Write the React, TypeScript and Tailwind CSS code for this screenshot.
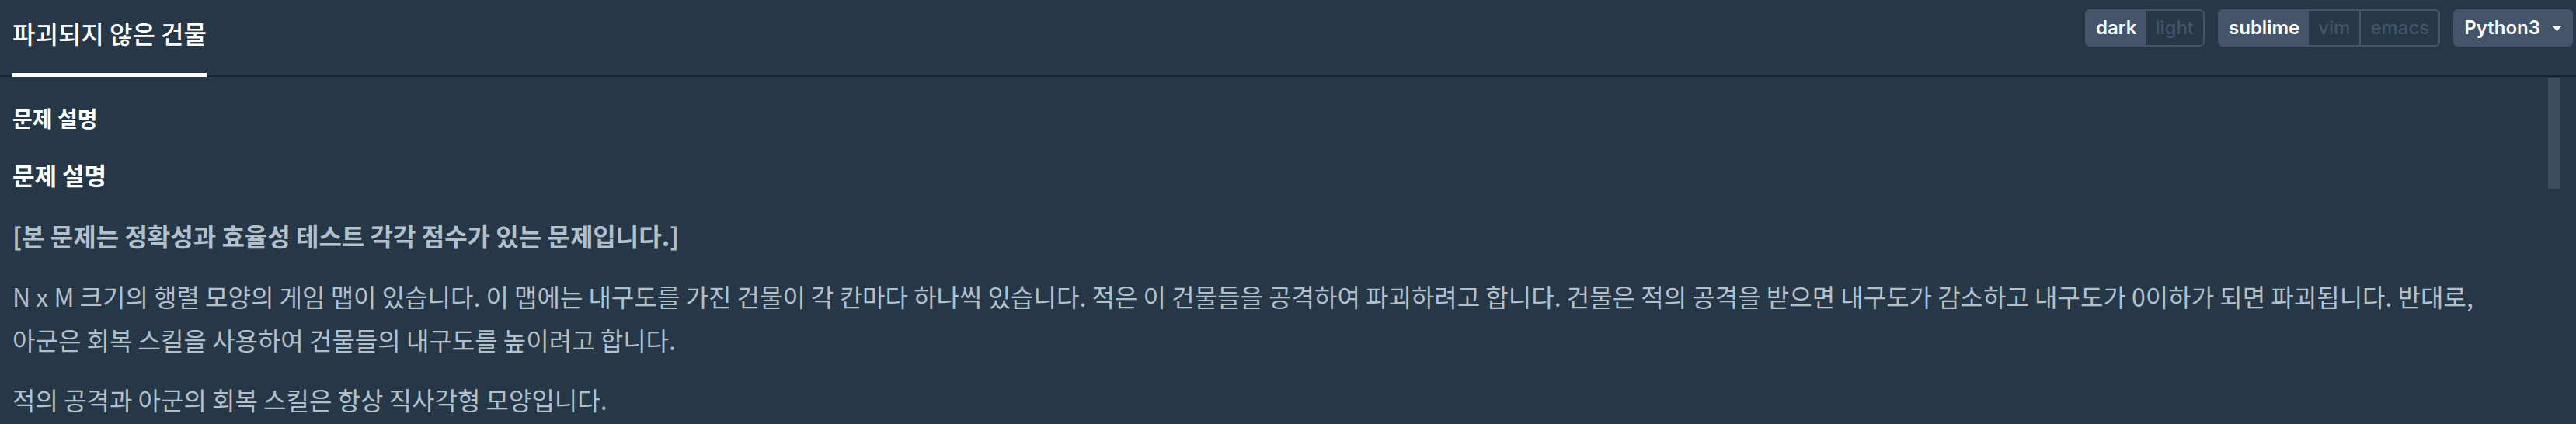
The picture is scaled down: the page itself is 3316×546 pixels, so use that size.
import React from "react";

const kr = { fontFamily: '"Noto Sans CJK KR", "Noto Sans", sans-serif' };

const SegGroup: React.FC<{ items: string[] }> = ({ items }) => {
    return (
        <div className="flex h-[48px] rounded-[6px] border-2 border-[#44546a] overflow-hidden">
            {items.map((item, index) => (
                <div
                    key={item}
                    className={
                        index === 0
                            ? "flex items-center px-[12px] bg-[#44546a] text-white font-semibold"
                            : index === 1
                                ? "flex items-center px-[12px] text-[#44546a] font-medium"
                                : "flex items-center px-[12px] text-[#44546a] font-medium border-l-2 border-[#44546a]"
                    }
                >
                    {item}
                </div>
            ))}
        </div>
    );
};

const App: React.FC = () => {
    return (
        <div className="w-full h-[546px] bg-[#263747] overflow-hidden flex flex-col">
            <div className="flex justify-between h-[99px] border-b-2 border-[#172334] shrink-0">
                <div className="ml-4 -mb-[2px] flex items-center pb-[10px] border-b-[5px] border-white">
                    <span className="text-white text-[32px] leading-[40px] font-medium" style={kr}>
                        파괴되지 않은 건물
                    </span>
                </div>
                <div className="flex items-start gap-[17px] pt-[12px] pr-[4px] text-[24px] font-['Inter',sans-serif]">
                    <SegGroup items={["dark", "light"]} />
                    <SegGroup items={["sublime", "vim", "emacs"]} />
                    <div className="flex items-center gap-[15px] h-[48px] px-[14px] rounded-[6px] bg-[#44546a] text-white font-semibold">
                        <span>Python3</span>
                        <svg width="13" height="7" viewBox="0 0 13 7">
                            <path d="M0 0 H13 L6.5 7 Z" fill="#ffffff" />
                        </svg>
                    </div>
                </div>
            </div>
            <div className="flex flex-1 min-h-0">
                <div className="flex-1 pl-4 pr-4 pt-[35px] break-keep" style={kr}>
                    <h5 className="text-white text-[28px] leading-[36px] font-bold">문제 설명</h5>
                    <h4 className="text-white text-[31px] leading-[40px] font-bold mt-[35px]">문제 설명</h4>
                    <p className="text-[#b2c0cc] text-[32px] leading-[56px] font-bold mt-[30px]">
                        [본 문제는 정확성과 효율성 테스트 각각 점수가 있는 문제입니다.]
                    </p>
                    <p className="text-[#b2c0cc] text-[32px] leading-[56px] mt-[22px]">
                        N x M 크기의 행렬 모양의 게임 맵이 있습니다. 이 맵에는 내구도를 가진 건물이 각 칸마다 하나씩 있습니다. 적은 이 건물들을 공격하여 파괴하려고 합니다. 건물은 적의 공격을 받으면 내구도가 감소하고 내구도가 0이하가 되면 파괴됩니다. 반대로, 아군은 회복 스킬을 사용하여 건물들의 내구도를 높이려고 합니다.
                    </p>
                    <p className="text-[#b2c0cc] text-[32px] leading-[56px] mt-[21px]">
                        적의 공격과 아군의 회복 스킬은 항상 직사각형 모양입니다.
                    </p>
                </div>
                <div className="w-[16px] mr-[20px] shrink-0">
                    <div className="mt-[1px] h-[143px] bg-[#3d4c5f]" />
                </div>
            </div>
        </div>
    );
};

export default App;
